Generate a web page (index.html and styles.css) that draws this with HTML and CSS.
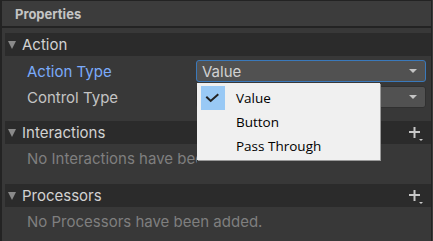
FILE: index.html
```html
<!DOCTYPE html>
<html>
<head>
<meta charset="utf-8">
<link rel="stylesheet" href="styles.css">
</head>
<body>
<div class="window">
  <div class="panel">
    <div class="title">Properties</div>
    <div class="content">
      <div class="section">
        <div class="section-head">
          <span class="fold"></span>
          <span class="section-name">Action</span>
        </div>
        <div class="rows">
          <div class="row">
            <span class="label active">Action Type</span>
            <div class="dropdown focused"><span>Value</span><span class="arrow"></span></div>
          </div>
          <div class="row">
            <span class="label">Control Type</span>
            <div class="dropdown"><span></span><span class="arrow"></span></div>
          </div>
        </div>
      </div>
      <div class="section">
        <div class="section-head">
          <span class="fold"></span>
          <span class="section-name">Interactions</span>
          <svg class="add" width="16" height="16" viewBox="0 0 16 16"><path d="M1 6h11M6.5 1v11" stroke="#c8c8c8" stroke-width="2" fill="none"/><path d="M11 13h4l-2 2z" fill="#c8c8c8"/></svg>
        </div>
        <div class="empty">No Interactions have been added.</div>
      </div>
      <div class="section">
        <div class="section-head">
          <span class="fold"></span>
          <span class="section-name">Processors</span>
          <svg class="add" width="16" height="16" viewBox="0 0 16 16"><path d="M1 6h11M6.5 1v11" stroke="#c8c8c8" stroke-width="2" fill="none"/><path d="M11 13h4l-2 2z" fill="#c8c8c8"/></svg>
        </div>
        <div class="empty">No Processors have been added.</div>
      </div>
    </div>
  </div>
  <div class="menu">
    <div class="item selected">
      <span class="check"><svg width="24" height="24" viewBox="0 0 24 24"><path d="M5.3 10.7L9.7 15L17.3 8.3" stroke="#222" stroke-width="2" fill="none"/></svg></span>
      <span>Value</span>
    </div>
    <div class="item"><span class="check"></span><span>Button</span></div>
    <div class="item"><span class="check"></span><span>Pass Through</span></div>
  </div>
</div>
</body>
</html>
```
FILE: styles.css
```css
html, body {
  margin: 0;
  padding: 0;
  background: #3a3a3a;
  width: 433px;
  height: 241px;
  overflow: hidden;
}
.window {
  position: relative;
  width: 433px;
  height: 241px;
  font-family: Inter, "Noto Sans", sans-serif;
}
.panel {
  width: 429px;
  height: 240px;
  border-top: 1px solid #232323;
  border-left: 2px solid #232323;
  border-right: 1px solid #232323;
  background: #383838;
  display: flex;
  flex-direction: column;
}
.title {
  height: 25px;
  line-height: 26px;
  background: #3c3c3c;
  border-bottom: 2px solid #232323;
  padding-left: 13px;
  font-size: 13px;
  font-weight: 700;
  color: #c4c4c4;
}
.content {
  padding: 5px 0 0 3px;
  width: 426px;
  display: flex;
  flex-direction: column;
}
.section-head {
  height: 23px;
  background: #2b2b2b;
  display: flex;
  align-items: center;
  color: #d2d2d2;
  font-size: 15px;
}
.fold {
  width: 0;
  height: 0;
  border-left: 4.5px solid transparent;
  border-right: 4.5px solid transparent;
  border-top: 8px solid #8a8a8a;
  margin-left: 3px;
  margin-right: 6px;
}
.section-name {
  flex: 1;
}
.add {
  margin-right: 7px;
  margin-top: 2px;
}
.rows {
  padding: 4px 0 13px 0;
  display: flex;
  flex-direction: column;
  gap: 4px;
}
.row {
  height: 22px;
  display: flex;
  align-items: center;
}
.label {
  width: 169px;
  padding-left: 22px;
  font-size: 15px;
  color: #c4c4c4;
}
.label.active {
  color: #7babfa;
}
.dropdown {
  flex: none;
  width: 223px;
  height: 20px;
  box-sizing: content-box;
  border: 1px solid #303030;
  border-radius: 3px;
  background: #515151;
  display: flex;
  align-items: center;
  justify-content: space-between;
  padding: 0 0 0 5px;
  font-size: 15px;
  color: #d2d2d2;
}
.dropdown.focused {
  border-color: #3a79bb;
}
.arrow {
  width: 0;
  height: 0;
  border-left: 4px solid transparent;
  border-right: 4px solid transparent;
  border-top: 4.5px solid #c4c4c4;
  margin-right: 8px;
}
.empty {
  height: 40px;
  line-height: 30px;
  padding-left: 22px;
  font-size: 15px;
  color: #7f7f7f;
}
.menu {
  position: absolute;
  left: 197px;
  top: 83px;
  width: 183px;
  height: 77px;
  box-sizing: border-box;
  background: #f0f0f0;
  box-shadow: 1px 1px 0 #9a9a9a, 0 8px 0 #383838;
  padding-top: 3px;
  font-family: "Open Sans", "Noto Sans", sans-serif;
  font-size: 13.5px;
  color: #000;
}
.item {
  height: 24px;
  display: flex;
  align-items: center;
}
.check {
  width: 24px;
  height: 24px;
  margin-left: 4px;
  margin-right: 11px;
}
.item.selected .check {
  background: #99c9f5;
}
.check svg {
  display: block;
}
```
